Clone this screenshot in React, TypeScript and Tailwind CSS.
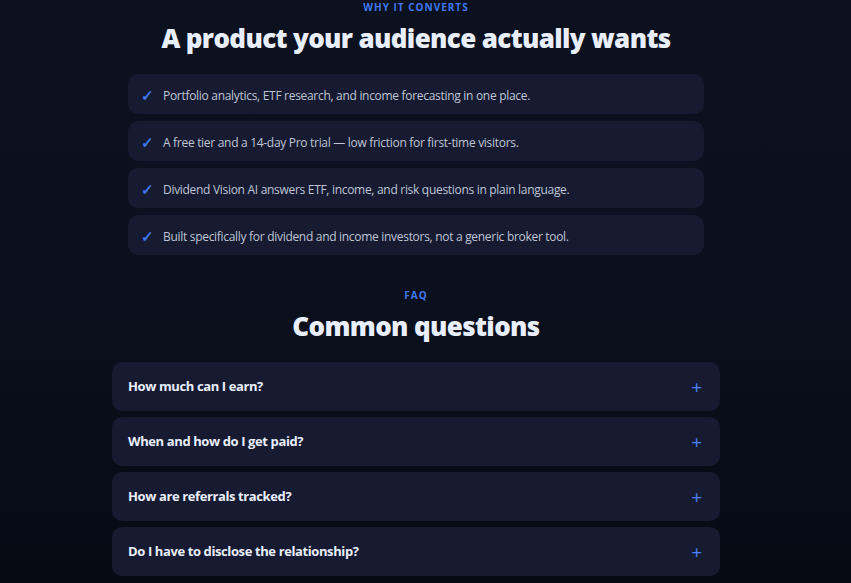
import React from "react";

const features = [
  "Portfolio analytics, ETF research, and income forecasting in one place.",
  "A free tier and a 14-day Pro trial — low friction for first-time visitors.",
  "Dividend Vision AI answers ETF, income, and risk questions in plain language.",
  "Built specifically for dividend and income investors, not a generic broker tool.",
];

const faqs = [
  "How much can I earn?",
  "When and how do I get paid?",
  "How are referrals tracked?",
  "Do I have to disclose the relationship?",
];

export default function App() {
  return (
    <div
      className="w-[851px] h-[583px] overflow-hidden bg-gradient-to-b from-[#0b111f] via-[#0a101d] to-[#060a13] pr-[19px]"
      style={{ fontFamily: '"Open Sans", "Noto Sans", sans-serif' }}
    >
      <div className="flex flex-col items-center">
        <div className="mt-[1px] h-[12px] text-[10px] leading-[12px] font-bold tracking-[0.1em] text-[#3f78f0]">
          WHY IT CONVERTS
        </div>
        <h2 className="mt-[8px] h-[34px] text-[26px] leading-[34px] font-extrabold text-[#e9eefb] tracking-[-0.025em]">
          A product your audience actually wants
        </h2>
        <div className="mt-[19px] w-[576px] flex flex-col gap-[7px]">
          {features.map((f) => (
            <div
              key={f}
              className="h-[40px] rounded-[10px] bg-[#161b32] flex items-center pl-[13px] pt-[3px]"
            >
              <span className="w-[22px] text-[15px] leading-none text-[#3f78f0] font-bold">✓</span>
              <span className="text-[12px] tracking-[-0.025em] text-[#bfc5d4]">{f}</span>
            </div>
          ))}
        </div>
        <div className="mt-[34px] h-[12px] text-[10px] leading-[12px] font-bold tracking-[0.1em] text-[#3f78f0]">
          FAQ
        </div>
        <h2 className="mt-[8px] h-[34px] text-[26px] leading-[34px] font-extrabold text-[#e9eefb] tracking-[-0.025em]">
          Common questions
        </h2>
        <div className="mt-[19px] w-[608px] flex flex-col gap-[6px]">
          {faqs.map((q) => (
            <div
              key={q}
              className="h-[49px] rounded-[10px] bg-[#161b32] flex items-center justify-between pl-[16px] pr-[18px] pt-[1px]"
            >
              <span className="text-[13px] tracking-[-0.03em] font-bold text-[#e9eefb]">{q}</span>
              <span className="text-[19px] font-normal text-[#4a82f7] leading-none">+</span>
            </div>
          ))}
        </div>
      </div>
    </div>
  );
}
